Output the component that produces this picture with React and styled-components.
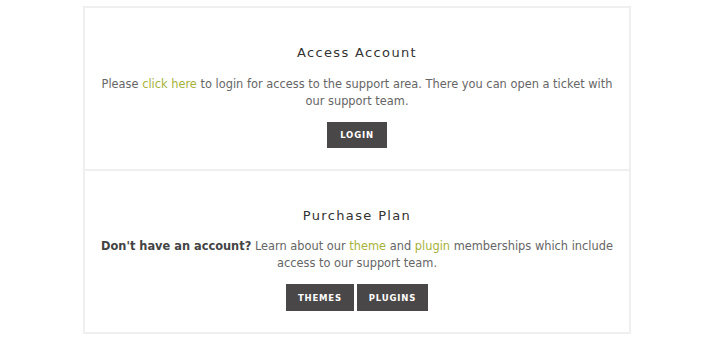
import React from "react";
import styled, { createGlobalStyle } from "styled-components";

const Global = createGlobalStyle`
  html, body { margin: 0; padding: 0; background: #ffffff; }
  body { font-family: "DejaVu Sans", "Open Sans", sans-serif; }
`;

const Page = styled.div`
  padding: 6px 0 6px 83px;
`;

const Card = styled.div`
  width: 544px;
  border: 2px solid #efefef;
  background: #fff;
`;

const Section = styled.section`
  padding: ${(p) => p.$pad};
  text-align: center;
  & + & { border-top: 2px solid #efefef; }
`;

const Title = styled.h3`
  margin: 0 0 ${(p) => p.$mb || 14}px;
  font-family: "DejaVu Sans", sans-serif;
  font-weight: 400;
  font-size: 13px;
  line-height: 18px;
  letter-spacing: 1.35px;
  color: #333;
`;

const Text = styled.p`
  margin: 0 auto;
  max-width: 520px;
  font-size: 11.4px;
  line-height: 17px;
  color: #666;
`;

const Strong = styled.strong`
  color: #444;
  font-weight: 700;
`;

const Link = styled.a`
  color: #a6b23a;
  text-decoration: none;
`;

const Buttons = styled.div`
  display: flex;
  justify-content: center;
  gap: 3px;
  margin-top: 12px;
`;

const Button = styled.a`
  display: inline-flex;
  align-items: center;
  justify-content: center;
  height: ${(p) => p.$h || 26}px;
  padding: 0 ${(p) => p.$px || 13}px;
  background: #4a4748;
  color: #fff;
  font-size: 8.5px;
  font-weight: 700;
  letter-spacing: 0.8px;
  text-transform: uppercase;
  text-decoration: none;
`;

export default function App() {
  return (
    <>
      <Global />
      <Page>
        <Card>
          <Section $pad="36px 12px 21px">
            <Title>Access Account</Title>
            <Text>
              Please <Link href="#">click here</Link> to login for access to the support area. There you can open a ticket with our support team.
            </Text>
            <Buttons>
              <Button href="#">Login</Button>
            </Buttons>
          </Section>
          <Section $pad="36px 12px 21px">
            <Title $mb={13}>Purchase Plan</Title>
            <Text>
              <Strong>Don't have an account?</Strong> Learn about our <Link href="#">theme</Link> and <Link href="#">plugin</Link> memberships which include access to our support team.
            </Text>
            <Buttons>
              <Button href="#" $h={27} $px={12}>Themes</Button>
              <Button href="#" $h={27} $px={12}>Plugins</Button>
            </Buttons>
          </Section>
        </Card>
      </Page>
    </>
  );
}
